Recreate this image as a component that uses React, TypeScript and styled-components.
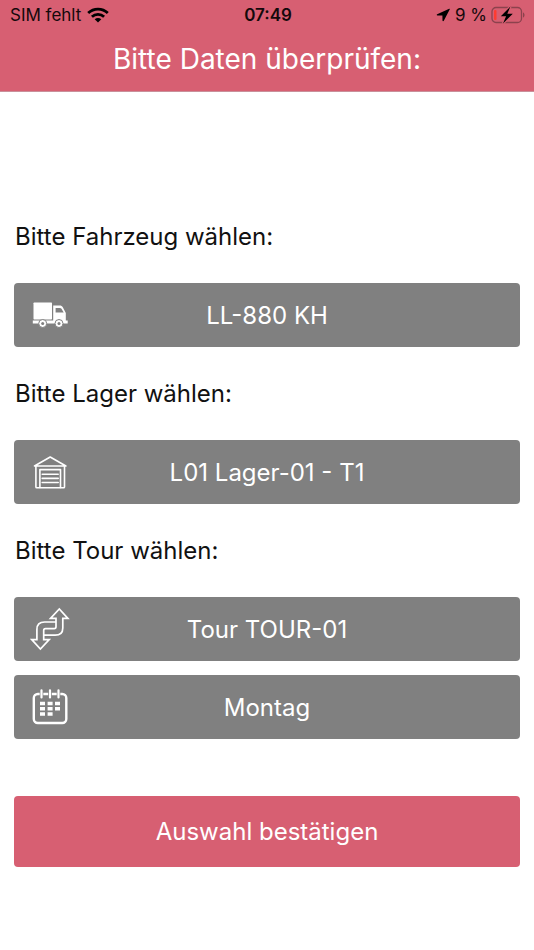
import React from "react";
import styled, { createGlobalStyle } from "styled-components";

const GlobalStyle = createGlobalStyle`
  *, *::before, *::after { box-sizing: border-box; }
  body {
    margin: 0;
    background: #ffffff;
    color: #111111;
    font-family: Inter, "Liberation Sans", sans-serif;
  }
`;

const Screen = styled.div`
  min-height: 100vh;
  display: flex;
  flex-direction: column;
`;

const Header = styled.header`
  background: #d75f72;
  border-bottom: 1px solid #c9909a;
  padding-bottom: 13px;
`;

const StatusBar = styled.div`
  display: grid;
  grid-template-columns: 1fr auto 1fr;
  align-items: center;
  height: 30px;
  padding: 0 8px 0 10px;
  color: #14090b;
  font-size: 17px;
  line-height: 20px;
`;

const StatusGroup = styled.div<{ $end?: boolean }>`
  display: flex;
  align-items: center;
  justify-content: ${(p) => (p.$end ? "flex-end" : "flex-start")};
  gap: ${(p) => (p.$end ? 4 : 6)}px;
`;

const Clock = styled.time`
  font-weight: 600;
`;

const Title = styled.h1`
  margin: 10px 0 0;
  color: #ffffff;
  font-size: 28px;
  font-weight: 400;
  line-height: 38px;
  text-align: center;
`;

const Form = styled.form`
  display: flex;
  flex-direction: column;
  gap: 14px;
  padding: 112px 14px 32px;
`;

const Section = styled.section`
  display: flex;
  flex-direction: column;
  gap: 14px;
`;

const SectionTitle = styled.h2`
  display: flex;
  align-items: center;
  height: 65px;
  margin: 0;
  padding-left: 1px;
  font-size: 24px;
  font-weight: 400;
`;

const Picker = styled.button`
  display: grid;
  grid-template-columns: 40px 1fr 40px;
  align-items: center;
  height: 64px;
  padding: 0 16px;
  border: 0;
  border-radius: 4px;
  background: #808080;
  color: #ffffff;
  font: inherit;
  font-size: 24px;
  cursor: pointer;
`;

const Confirm = styled.button`
  height: 71px;
  margin-top: 43px;
  border: 0;
  border-radius: 4px;
  background: #d75f72;
  color: #ffffff;
  font: inherit;
  font-size: 24px;
  cursor: pointer;
`;

const WifiIcon = () => (
  <svg width="22" height="16" viewBox="0 0 22 16" fill="none" stroke="#000" strokeWidth="2.8" aria-hidden="true">
    <path d="M1.2 6.1C6.7.9 15.3.9 20.8 6.1" />
    <path d="M4.9 9.8C8.4 6.6 13.6 6.6 17.1 9.8" />
    <path d="M11 15.4 7.7 12.2C9.6 10.6 12.4 10.6 14.3 12.2Z" fill="#000" stroke="none" />
  </svg>
);

const LocationIcon = () => (
  <svg width="15" height="14" viewBox="0 0 15 14" aria-hidden="true">
    <path d="M13.2.7 1.2 6.2c-.7.4-.5 1.2.2 1.2l5 .1.1 5.1c0 .8.9.9 1.3.2L13.8 1.3c.2-.5-.1-.8-.6-.6Z" fill="#000" />
  </svg>
);

const BatteryIcon = () => (
  <svg width="35" height="18" viewBox="0 0 35 18" aria-hidden="true">
    <rect x="1" y="1.5" width="29.5" height="15" rx="4" fill="none" stroke="#8c424d" strokeWidth="1.3" />
    <path d="M32 6.5c2 .6 2 4.4 0 5Z" fill="#8c424d" />
    <rect x="3" y="4" width="2.5" height="10" rx="1" fill="#ff3b30" />
    <path d="M19.4.6 9.8 10.2h5.3L12 17.4l9.8-9.7h-5.5Z" fill="#000" stroke="#d75f72" strokeWidth="2.4" paintOrder="stroke" />
  </svg>
);

const TruckIcon = () => (
  <svg width="40" height="40" viewBox="0 0 40 40" aria-hidden="true">
    <rect x="3.5" y="7.5" width="18.5" height="17" rx=".7" fill="#fff" />
    <path fillRule="evenodd" d="M2.8 25.5h20.4V10.6h6.5c1.4 0 2.4.5 3.1 1.7l3 5.6v7.6h1.9v3.1H2.8ZM25.6 12.9v4.7h8.1l-2.4-4c-.4-.5-.8-.7-1.4-.7Z" fill="#fff" />
    <g fill="#fff" stroke="#808080">
      <circle cx="12.7" cy="28.5" r="4" />
      <circle cx="29" cy="28.5" r="4" />
    </g>
    <g fill="#808080">
      <circle cx="12.7" cy="28.5" r="1.5" />
      <circle cx="29" cy="28.5" r="1.5" />
    </g>
  </svg>
);

const GarageIcon = () => (
  <svg width="40" height="40" viewBox="0 0 40 40" fill="none" stroke="#fff" strokeWidth="1.6" strokeLinejoin="round" strokeLinecap="round" aria-hidden="true">
    <path d="M5.9 14V34.9Q5.9 35.8 6.8 35.8H33.6Q34.5 35.8 34.5 34.9V14" />
    <path d="M4.5 14 20.2 5 35.9 14Z" />
    <path d="M9.9 35.4V17.6H30.5V35.4" />
    <path d="M12.2 22.3H28.2M12.2 26.4H28.2M12.2 30.5H28.2" />
  </svg>
);

const RouteIcon = () => (
  <svg width="40" height="44" viewBox="0 0 40 44" fill="none" stroke="#fff" strokeWidth="1.7" aria-hidden="true">
    <path d="M26 15H14.6Q6.9 15 6.9 22.4V32.6H1.8L10.4 42 19.2 32.6H13.7V23.4Q13.7 21.6 15.5 21.6H24.2Q26 21.6 26 19.8V11.4H20.5L29.3 2 37.9 11.4H32.8V21Q32.8 28.2 25.1 28.2H13.7" />
  </svg>
);

const CalendarIcon = () => (
  <svg width="40" height="40" viewBox="0 0 40 40" aria-hidden="true">
    <rect x="3.8" y="7" width="32.5" height="29" rx="4" fill="none" stroke="#fff" strokeWidth="2.4" />
    <path d="M11.5 2.5V11M20 2.5V11M28.5 2.5V11" stroke="#808080" strokeWidth="3.6" />
    <path d="M11.5 3.3V10.4M20 3.3V10.4M28.5 3.3V10.4" stroke="#fff" strokeWidth="2.2" strokeLinecap="round" />
    <path d="M10 16.6H15M17.6 16.6H22.6M25 16.6H30M10 21.8H15M17.6 21.8H22.6M25 21.8H30M10 27H15M17.6 27H22.6" stroke="#fff" strokeWidth="3.5" />
  </svg>
);

type Field = { value: string; icon: React.ReactNode };

const sections: { title: string; fields: Field[] }[] = [
  { title: "Bitte Fahrzeug wählen:", fields: [{ value: "LL-880 KH", icon: <TruckIcon /> }] },
  { title: "Bitte Lager wählen:", fields: [{ value: "L01 Lager-01 - T1", icon: <GarageIcon /> }] },
  {
    title: "Bitte Tour wählen:",
    fields: [
      { value: "Tour TOUR-01", icon: <RouteIcon /> },
      { value: "Montag", icon: <CalendarIcon /> },
    ],
  },
];

export default function App() {
  return (
    <Screen>
      <GlobalStyle />
      <Header>
        <StatusBar>
          <StatusGroup>
            <span>SIM fehlt</span>
            <WifiIcon />
          </StatusGroup>
          <Clock>07:49</Clock>
          <StatusGroup $end>
            <LocationIcon />
            <span>9 %</span>
            <BatteryIcon />
          </StatusGroup>
        </StatusBar>
        <Title>Bitte Daten überprüfen:</Title>
      </Header>
      <Form onSubmit={(e) => e.preventDefault()}>
        {sections.map((section) => (
          <Section key={section.title}>
            <SectionTitle>{section.title}</SectionTitle>
            {section.fields.map((field) => (
              <Picker key={field.value} type="button">
                {field.icon}
                <span>{field.value}</span>
              </Picker>
            ))}
          </Section>
        ))}
        <Confirm type="submit">Auswahl bestätigen</Confirm>
      </Form>
    </Screen>
  );
}
